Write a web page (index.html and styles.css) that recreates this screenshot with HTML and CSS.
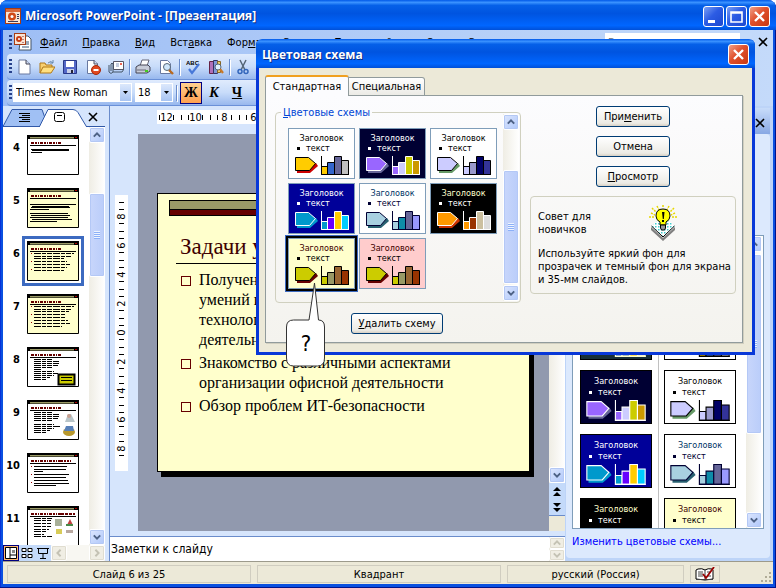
FILE: index.html
```html
<!DOCTYPE html>
<html lang="ru">
<head>
  <meta charset="UTF-8">
  <title>Microsoft PowerPoint - [Презентация]</title>
  <link rel="stylesheet" href="styles.css">
</head>
<body>
  <svg class="defs" aria-hidden="true">
    <symbol id="up" viewBox="0 0 10 8"><path d="M1 6l4-4 4 4" fill="none" stroke="currentColor" stroke-width="2.4"/></symbol>
    <symbol id="down" viewBox="0 0 10 8"><path d="M1 2l4 4 4-4" fill="none" stroke="currentColor" stroke-width="2.4"/></symbol>
    <symbol id="cross" viewBox="0 0 12 12"><path d="M2 2l8 8M10 2l-8 8" fill="none" stroke="currentColor" stroke-width="1.6"/></symbol>
    <symbol id="caret" viewBox="0 0 5 3"><path d="M0 0h5L2.5 3z"/></symbol>
    <symbol id="logo" viewBox="0 0 16 16">
      <rect x=".5" y=".5" width="15" height="15" fill="#f8e4d4" stroke="#a83c14"/>
      <path d="M1 1h14v3H1z" fill="#d8683c"/>
      <circle cx="7" cy="8.500" r="4" fill="#d04818"/><circle cx="7" cy="8.500" r="1.500" fill="#fff"/>
      <path d="M12 6h2v1h-2zM12 8h2v1h-2zM12 10h2v1h-2zM3 13h10v1H3z" fill="#3a3a5a"/>
    </symbol>
    <symbol id="diagram" viewBox="0 0 54 20">
      <path class="a-shadow" d="M2 14v3h13l8-7-2-3z"/>
      <path class="a-face" d="M.5 1.500h13l7 6-6 7H.5z"/>
      <path class="c1" d="M26.500 10.500h6v8h-6z"/>
      <path class="c2" d="M32.500 6.500h7v12h-7z"/>
      <path class="c3" d="M39.500 .5h7v18h-7z"/>
      <path class="c4" d="M46.500 4.500h7v14h-7z"/>
      <path class="axis" d="M26.500 0v18.500H54"/>
    </symbol>
    <symbol id="thumbTop" viewBox="0 0 52 40">
      <path d="M0 0h52v4H0z"/>
      <path d="M3 2h44v1.500H3z" fill="#999966"/>
      <path d="M48 2h2v1h-2z" fill="#a00"/>
      <path d="M4 8h31" stroke="#600" stroke-width="2" stroke-dasharray="3 1 2 1 1 1"/>
      <path d="M3 10.500h46" stroke="#000"/>
      <path d="M.5 .5h51v39H.5z" fill="none" stroke="#000"/>
    </symbol>
  </svg>

  <div class="window">
    <header class="titlebar">
      <svg class="icon"><use href="#logo"/></svg>
      <h1>Microsoft PowerPoint - [Презентация]</h1>
      <button class="caption" aria-label="Свернуть"><svg viewBox="0 0 19 19"><path d="M4 13h7v3H4z" fill="#fff"/></svg></button>
      <button class="caption" aria-label="Развернуть"><svg viewBox="0 0 19 19"><path d="M4 5h11v10H4zM4 6h11" fill="none" stroke="#fff" stroke-width="1.600"/></svg></button>
      <button class="caption red" aria-label="Закрыть"><svg viewBox="0 0 19 19"><path d="M5 5l9 9M14 5l-9 9" stroke="#fff" stroke-width="2.400"/></svg></button>
    </header>

    <div class="bars">
      <nav class="menubar">
        <span class="grip"></span>
        <svg class="doc" viewBox="0 0 18 18"><path d="M7 3h7l3 3v11H5z" fill="#fff" stroke="#456"/><path d="M12 9h3M12 11h3M8 14h7" stroke="#357"/><rect x=".5" y=".5" width="11" height="11" fill="#f8e4d4" stroke="#a83c14"/><circle cx="5" cy="6" r="3" fill="#c83c14"/><circle cx="5" cy="6" r="1" fill="#fff"/><path d="M9 3v1M9 6v1M9 9v1" stroke="#822"/></svg>
        <a href="#"><u>Ф</u>айл</a>
        <a href="#"><u>П</u>равка</a>
        <a href="#"><u>В</u>ид</a>
        <a href="#">Вст<u>а</u>вка</a>
        <a href="#">Фор<u>м</u>ат</a>
        <a href="#">С<u>е</u>рвис</a>
        <a href="#">Показ слайдов</a>
        <a href="#">Окно</a>
        <a href="#">Справка</a>
        <input class="ask" aria-label="Вопрос" placeholder="Введите вопрос">
        <button class="x" aria-label="Закрыть документ"><svg><use href="#cross"/></svg></button>
      </nav>

      <div class="toolbar">
        <span class="grip"></span>
        <button aria-label="Создать"><svg viewBox="0 0 16 16"><path d="M3 1h7l4 4v10H3z" fill="#fff" stroke="#6878a0"/><path d="M10 1v4h4" fill="#cdd8ee" stroke="#445"/></svg></button>
        <button aria-label="Открыть"><svg viewBox="0 0 16 16"><path d="M1 14V4h5l1 2h6v3" fill="#f8d070" stroke="#b07818"/><path d="M1 14l3-6h12l-4 6z" fill="#ffe080" stroke="#b07818"/><path d="M9 4q3-3 5 0m0-3v3h-3" fill="none" stroke="#68a"/></svg></button>
        <button aria-label="Сохранить"><svg viewBox="0 0 16 16"><path d="M1.500 1.500h13v13h-13z" fill="#5468c8" stroke="#283888"/><path d="M4 2h8v6H4z" fill="#fff"/><path d="M5 10h7v4H5z" fill="#c8d0e8"/><path d="M9 11h2v3H9z" fill="#223"/></svg></button>
        <button aria-label="Разрешения"><svg viewBox="0 0 16 16"><path d="M2.500 1.500h7l3 3v10h-10z" fill="#fff" stroke="#6878a0"/><path d="M9 1v4h4" fill="#cdd8ee" stroke="#556"/><circle cx="11" cy="11" r="4.500" fill="#e04820" stroke="#a82808"/><path d="M8.500 11h5" stroke="#fff" stroke-width="2"/></svg></button>
        <button aria-label="Сообщение"><svg viewBox="0 0 16 16"><path d="M5.500 2.500h10v8h-10z" fill="#fff" stroke="#556"/><path d="M8 5h3M8 7h3" stroke="#89b"/><path d="M12 4h2v2h-2z" fill="#e65"/><path d="M1 6v7q2 3 4 0V5Q4 3 3 5v7M5 13h9l2-3" fill="none" stroke="#456"/></svg></button>
        <span class="sep"></span>
        <button aria-label="Печать"><svg viewBox="0 0 16 16"><path d="M5 7l2-6h7l-2 6" fill="#fff" stroke="#667"/><path d="M1 8l3-2h9l2 2v4l-3 2H1z" fill="#c8ccd8" stroke="#445"/><path d="M2 11h9" stroke="#667"/><path d="M10 11h3v2h-3z" fill="#4c2"/></svg></button>
        <button aria-label="Просмотр"><svg viewBox="0 0 16 16"><path d="M2.500 1.500h7l3 3v10h-10z" fill="#fff" stroke="#6878a0"/><circle cx="9" cy="8" r="3.500" fill="#cfe6fa" stroke="#567"/><path d="M11 11l4 4" stroke="#b86a20" stroke-width="2.400"/></svg></button>
        <span class="sep"></span>
        <button aria-label="Орфография"><svg viewBox="0 0 16 16"><text x="1" y="6" class="abc">ABC</text><path d="M4 10l3 4 7-9" fill="none" stroke="#4878d8" stroke-width="2.200"/></svg></button>
        <button aria-label="Справочные материалы"><svg viewBox="0 0 16 16"><path d="M1.500 2.500h4v12h-4z" fill="#b070b8" stroke="#624"/><path d="M5.500 1.500h4v13h-4z" fill="#8098d8" stroke="#336"/><path d="M9.500 2.500h3v11h-3z" fill="#f0d068" stroke="#862"/><circle cx="10" cy="8" r="3" fill="#dff0ff" stroke="#567"/><path d="M12 10l3 4" stroke="#c87828" stroke-width="2.200"/></svg></button>
        <span class="sep"></span>
        <button aria-label="Вырезать"><svg viewBox="0 0 16 16"><path d="M5 1l5 10M11 1L6 11" stroke="#567" stroke-width="1.500"/><circle cx="5" cy="12.500" r="2" fill="none" stroke="#36b" stroke-width="1.500"/><circle cx="11" cy="12.500" r="2" fill="none" stroke="#36b" stroke-width="1.500"/></svg></button>
      </div>

      <div class="toolbar format">
        <span class="grip"></span>
        <span class="combo font"><select aria-label="Шрифт"><option>Times New Roman</option></select><svg><use href="#caret"/></svg></span>
        <span class="combo size"><select aria-label="Размер"><option>18</option></select><svg><use href="#caret"/></svg></span>
        <span class="sep"></span>
        <button class="letter on"><b>Ж</b></button>
        <button class="letter"><i>К</i></button>
        <button class="letter"><u>Ч</u></button>
      </div>
    </div>

    <main class="workspace">
      <aside class="outline">
        <div class="outline-tabs">
          <svg viewBox="0 0 104 21" preserveAspectRatio="xMinYMid slice">
            <path d="M0 20.500L9 3.500h30l6 17z" fill="#a0c0f4" stroke="#3058a8"/>
            <path d="M36 21.500L45 3.500h25q3 0 5 3l9 15z" fill="#fff" stroke="#3058a8"/>
            <path d="M0 20.500h37M83 20.500h21" stroke="#3058a8"/>
            <path d="M16 7.500h11M19 9.500h8M16 11.500h11M19 13.500h8M16 15.500h11" stroke="#000"/>
            <rect x="51.500" y="6.500" width="10" height="9" rx="2" fill="#fff" stroke="#000"/><path d="M54 9.500h5" stroke="#000"/>
          </svg>
          <button class="x" aria-label="Закрыть область"><svg><use href="#cross"/></svg></button>
        </div>
        <div class="outline-body">
          <ol class="thumbs">
            <li><span>4</span><svg viewBox="0 0 52 40"><rect width="52" height="40" fill="#fff"/><path class="ln" d="M4 14.500h38" /><path class="ln" d="M5 15.500h37M4 17.500h11"/><use href="#thumbTop"/></svg></li>
            <li><span>5</span><svg viewBox="0 0 52 40"><rect width="52" height="40" fill="#ffffcc"/><path class="ln" d="M3 16.500h46M5 18.500h37M4 19.500h39M3 21.500h19M3 25.500h38M4 27.500h39M3 29.500h38M5 31.500h40M3 33.500h27"/><use href="#thumbTop"/></svg></li>
            <li class="current"><span>6</span><svg viewBox="0 0 52 40"><rect width="52" height="40" fill="#ffffcc"/><path class="ln dash" d="M7 12.500h40M7 15.500h38M7 17.500h30M7 20.500h33M7 23.500h36M7 26.500h33M7 29.500h30"/><path class="dots" d="M4.500 12v18"/><use href="#thumbTop"/></svg></li>
            <li><span>7</span><svg viewBox="0 0 52 40"><rect width="52" height="40" fill="#ffffcc"/><path class="ln dash" d="M7 12.500h40M7 15.500h38M7 17.500h35M7 20.500h32M7 23.500h32M7 26.500h34M7 29.500h36M7 32.500h28"/><path class="dots" d="M4.500 12v22"/><use href="#thumbTop"/></svg></li>
            <li><span>8</span><svg viewBox="0 0 52 40"><rect width="52" height="40" fill="#fff"/><path class="ln dash" d="M7 12.500h18M7 14.500h25M7 16.500h25M7 18.500h24M7 20.500h19M7 22.500h8M7 24.500h20M7 26.500h24M7 28.500h20M7 30.500h16M7 32.500h12"/><path d="M31.500 27.500h16v10h-16z" fill="#cc0" stroke="#000" stroke-width="2"/><path class="ln" d="M34 30.500h11M34 33.500h11"/><use href="#thumbTop"/></svg></li>
            <li><span>9</span><svg viewBox="0 0 52 40"><rect width="52" height="40" fill="#fff"/><path class="ln dash" d="M7 12.500h18M7 14.500h25M7 16.500h25M7 18.500h24M7 20.500h19M7 24.500h20M7 26.500h26M7 28.500h20M7 30.500h16M7 32.500h12"/><path d="M38 22l3-8h3l4 8z" fill="#b8c4c8"/><circle cx="42" cy="16" r="2" fill="#c8a090"/><ellipse cx="42" cy="32" rx="6" ry="4" fill="#b8982c"/><path d="M37 31l2-5h7l1 5z" fill="#5880b8"/><use href="#thumbTop"/></svg></li>
            <li><span>10</span><svg viewBox="0 0 52 40"><rect width="52" height="40" fill="#fff"/><path class="ln" d="M7 13.500h33M7 16.500h32M7 18.500h9M7 21.500h35M7 24.500h32M7 27.500h34M7 30.500h35M7 32.500h22"/><path class="dots" d="M4.500 13v18"/><use href="#thumbTop"/><path d="M34 8h10" stroke="#600" stroke-width="2" stroke-dasharray="2 1"/></svg></li>
            <li><span>11</span><svg viewBox="0 0 52 40"><rect width="52" height="40" fill="#fff"/><path class="ln dash" d="M7 12.500h18M7 14.500h17M7 17.500h17M7 20.500h17M7 23.500h15M7 25.500h12M7 28.500h10M7 30.500h18"/><path d="M28 13h7v7h-7z" fill="#a8b098"/><path d="M40 19l3-6 3 6z" fill="#c04040"/><path d="M39 18h7v2h-7z" fill="#488848"/><path d="M29 23h6v5h-6z" fill="#d8cc58"/><path d="M39 24h7v3h-7z" fill="#b8a8a0"/><use href="#thumbTop"/><path d="M34 8h14" stroke="#600" stroke-width="2" stroke-dasharray="3 1"/></svg></li>
          </ol>
          <div class="scroll">
            <button aria-label="Вверх"><svg><use href="#up"/></svg></button>
            <span class="track"><span class="thumb slides-thumb"></span></span>
            <button aria-label="Вниз"><svg><use href="#down"/></svg></button>
          </div>
        </div>
        <div class="views">
          <button class="on" aria-label="Обычный"><svg viewBox="0 0 12 12"><path d="M.5 .5h11v11H.5zM5 1v10M5 8h6" fill="#fff" stroke="#000"/><path d="M7 3h3v3H7z" fill="#888"/></svg></button>
          <button aria-label="Сортировщик"><svg viewBox="0 0 12 12"><path d="M1 1.500h4v3H1zM7 1.500h4v3H7zM1 7.500h4v3H1zM7 7.500h4v3H7z" fill="#fff" stroke="#000"/></svg></button>
          <button aria-label="Показ слайдов"><svg viewBox="0 0 12 12"><path d="M0 1.500h12M1.500 2v4.500h9V2M6 7v4M3 11.500h6" fill="none" stroke="#000"/></svg></button>
          <div class="hscroll">
            <button disabled aria-label="Влево"><svg><use href="#up"/></svg></button>
            <button disabled aria-label="Вправо"><svg><use href="#down"/></svg></button>
          </div>
        </div>
      </aside>

      <section class="editor">
        <div class="hruler" id="hruler"></div>
        <div class="vruler" id="vruler"></div>
        <div class="canvas">
          <article class="slide">
            <div class="band"></div>
            <h2>Задачи урока</h2>
            <ul>
              <li>Получение<br>умений и<br>технологий<br>деятельности</li>
              <li>Знакомство с различными аспектами<br>организации офисной деятельности</li>
              <li>Обзор проблем ИТ-безопасности</li>
            </ul>
          </article>
        </div>
        <div class="side">
          <div class="scroll">
            <button aria-label="Вверх"><svg><use href="#up"/></svg></button>
            <span class="track"></span>
            <button aria-label="Вниз"><svg><use href="#down"/></svg></button>
          </div>
          <button class="jump" aria-label="Предыдущий слайд"><svg viewBox="0 0 8 9"><path d="M4 0l4 4H0zM4 5l4 4H0z"/></svg></button>
          <button class="jump" aria-label="Следующий слайд"><svg viewBox="0 0 8 9"><path d="M0 0h8L4 4zM0 5h8L4 9z"/></svg></button>
          <span class="corner"></span>
        </div>
        <div class="notes">
          <p>Заметки к слайду</p>
          <div class="scroll">
            <button disabled aria-label="Вверх"><svg><use href="#up"/></svg></button>
            <button disabled aria-label="Вниз"><svg><use href="#down"/></svg></button>
          </div>
        </div>
      </section>

      <aside class="pane">
        <div class="pane-head"><button class="x" aria-label="Закрыть панель"><svg><use href="#cross"/></svg></button></div>
        <div class="pane-body">
          <div class="pane-list">
            <div class="pane-schemes" id="paneSchemes"></div>
            <div class="scroll">
              <button aria-label="Вверх"><svg><use href="#up"/></svg></button>
              <span class="track"><span class="thumb pane-thumb"></span></span>
              <button aria-label="Вниз"><svg><use href="#down"/></svg></button>
            </div>
          </div>
          <a class="edit" href="#">Изменить цветовые схемы...</a>
        </div>
      </aside>
    </main>

    <footer class="status">
      <span class="wide">Слайд 6 из 25</span>
      <span class="wide">Квадрант</span>
      <span class="lang">русский (Россия)</span>
      <span class="spell"><svg viewBox="0 0 20 15"><path d="M1 3l2-1q4-1 7 1 3-2 7-1l1 1v9l-8 1-9-1z" fill="#fff" stroke="#000"/><path d="M10 3v10M3 5h5M3 7h5M3 9h5M12 5h4M12 9h4M1 12.500h17" stroke="#444"/><path d="M8 7l3 4 8-11" fill="none" stroke="#900" stroke-width="1.800"/></svg></span>
      <svg class="resize" viewBox="0 0 12 12"><path d="M9 1h2v2H9zM5 5h2v2H5zM9 5h2v2H9zM1 9h2v2H1zM5 9h2v2H5zM9 9h2v2H9z" fill="#b0ac98"/></svg>
    </footer>

    <div class="dialog" role="dialog" aria-label="Цветовая схема">
      <header class="titlebar">
        <h1>Цветовая схема</h1>
        <button class="caption red" aria-label="Закрыть"><svg viewBox="0 0 19 19"><path d="M5 5l9 9M14 5l-9 9" stroke="#fff" stroke-width="2.400"/></svg></button>
      </header>
      <div class="tabs">
        <button class="tab active">Стандартная</button>
        <button class="tab">Специальная</button>
      </div>
      <div class="page">
        <div class="left">
          <fieldset>
            <legend><u>Ц</u>ветовые схемы</legend>
            <div class="schemes" id="dialogSchemes"></div>
            <div class="scroll">
              <button aria-label="Вверх"><svg><use href="#up"/></svg></button>
              <span class="track"><span class="thumb dialog-thumb"></span></span>
              <button aria-label="Вниз"><svg><use href="#down"/></svg></button>
            </div>
          </fieldset>
          <button class="btn delete"><u>У</u>далить схему</button>
        </div>
        <div class="right">
          <button class="btn">При<u>м</u>енить</button>
          <button class="btn">Отмена</button>
          <button class="btn"><u>П</u>росмотр</button>
          <div class="tip">
            <div class="tip-head">
              <p>Совет для новичков</p>
              <svg viewBox="0 0 28 36">
                <defs><pattern id="dots" width="3" height="3" patternUnits="userSpaceOnUse"><rect width="3" height="3" fill="#fff"/><rect width="1.500" height="1.500" fill="#4cc"/></pattern></defs>
                <path d="M2 22l12 11 12-11v3L14 36 2 25z" fill="#808080"/>
                <path d="M2.500 21L14 10l11.500 11L14 32z" fill="url(#dots)"/>
                <path d="M2.500 21L14 32l11.500-11" fill="none" stroke="#000"/>
                <path d="M14 0v3M3 3l4 4M25 3l-4 4M0 12h5M28 12h-5M8 1l2 4M20 1l-2 4M2 8l4 2M26 8l-4 2" stroke="#e8d800" stroke-width="1.500" stroke-dasharray="2 1"/>
                <path d="M11 20v-3q-4-2-4-6 0-7 7-7t7 7q0 4-4 6v3z" fill="#ff0" stroke="#000"/>
                <path d="M11.500 20h5v3l-1 2h-3l-1-2z" fill="#999" stroke="#000"/>
                <path d="M13 7h2.500l-.7 7h-1zM13 15h2v2h-2z"/>
              </svg>
            </div>
            <p>Используйте яркий фон для прозрачек и темный фон для экрана и 35-мм слайдов.</p>
          </div>
        </div>
      </div>
      <div class="callout">
        <svg viewBox="0 0 40 85"><path d="M23 38L28.500 1l4 37q6 0 6 7v31q0 8-7 8h-24q-7 0-7-8V45q0-7 7-7z" fill="#fff" stroke="#333"/></svg>
        <span>?</span>
      </div>
    </div>
  </div>

  <script>
    const dialogSchemes = ["white", "night", "lilac", "royal", "teal", "black", "cream", "pink"];
    const paneSchemes = ["forest", "white", "night", "lilac", "royal", "teal", "black", "cream"];

    function card(name) {
      const picked = name === "cream" ? " picked" : "";
      return `<button class="scheme ${name}${picked}">
        <span class="s-title">Заголовок</span>
        <span class="s-text">текст</span>
        <svg><use href="#diagram"/></svg>
      </button>`;
    }

    function fill(id, list, make) {
      document.getElementById(id).innerHTML = list.map(make).join("");
    }

    fill("dialogSchemes", dialogSchemes, card);
    fill("paneSchemes", paneSchemes, card);
    fill("hruler", [12, 10, 8, 6, "", "", "", "", "", "", "", "", ""], n => `<span><b>${n}</b></span>`);
    fill("vruler", [8, 6, 4, 2, 0, 2, 4, 6, 8], n => `<span><b>${n}</b></span>`);
  </script>
</body>
</html>
```
FILE: styles.css
```css
* {
  box-sizing: border-box;
}
body {
  margin: 0;
  background: #fff;
  color: #000;
  font: 11px/13px "DejaVu Sans Condensed", "Liberation Sans", sans-serif;
}
h1, h2, p, ul, ol {
  margin: 0;
  padding: 0;
}
button {
  padding: 0;
  border: 0;
  background: none;
  color: inherit;
  font: inherit;
}
svg {
  display: block;
}
.defs {
  position: absolute;
  width: 0;
  height: 0;
}

/* main window */
.window {
  position: relative;
  display: flex;
  flex-direction: column;
  height: 100vh;
  min-height: 500px;
  padding: 0 3px 4px;
  background: #0a50e0;
  border-radius: 8px 8px 0 0;
  box-shadow: inset -1px -1px 0 #00138c, inset 1px 0 0 #0831d9;
  overflow: hidden;
}
.titlebar {
  display: flex;
  flex: none;
  align-items: center;
  gap: 2px;
  height: 30px;
  margin: 0 -3px;
  padding: 2px 6px 0 5px;
  background: linear-gradient(#0058e8, #3a92ff 8%, #0560e8 18%, #0054e0 45%, #0066ff 85%, #0050d8);
  color: #fff;
}
.titlebar h1 {
  flex: 1;
  padding-left: 2px;
  font: bold 12px/16px "Open Sans", "Noto Sans", sans-serif;
  text-shadow: 1px 1px 0 #0a2a80;
}
.icon {
  width: 16px;
  height: 16px;
}
.caption {
  width: 21px;
  height: 21px;
  border: 1px solid #fff;
  border-radius: 3px;
  background: linear-gradient(135deg, #7ba0f4, #2c5ce4 45%, #1c48d0);
}
.caption.red {
  background: linear-gradient(135deg, #f0a088, #e0502c 45%, #c83810);
}

.bars {
  flex: none;
  background: linear-gradient(90deg, #9ebef5, #c4dafa);
}
.menubar {
  display: flex;
  align-items: center;
  gap: 15px;
  height: 24px;
  padding: 0 4px 0 6px;
  white-space: nowrap;
}
.menubar a {
  color: #000;
  text-decoration: none;
}
.menubar .grip {
  margin-right: -13px;
}
.doc {
  flex: none;
  width: 18px;
  height: 18px;
  margin-right: -7px;
}
.ask {
  width: 147px;
  height: 18px;
  margin-left: auto;
  padding: 0 3px;
  border: 0;
  border-right: 12px solid #c4dafa;
  font: inherit;
}
.x {
  width: 12px;
  height: 12px;
}
.x svg {
  width: 12px;
  height: 12px;
}
.menubar .x {
  margin-left: -10px;
}
.grip {
  flex: none;
  width: 3px;
  height: 15px;
  background: repeating-linear-gradient(#27418c 0 2px, transparent 2px 4px);
}

.toolbar {
  display: flex;
  align-items: center;
  gap: 7px;
  width: 80%;
  height: 26px;
  margin-left: 4px;
  padding-left: 2px;
  border-bottom: 1px solid #6a90d8;
  border-radius: 4px;
  background: linear-gradient(#e0ebfd, #c8dcfa 50%, #98b8ee);
}
.toolbar .grip {
  margin-right: -3px;
}
.toolbar button {
  flex: none;
  width: 16px;
}
.toolbar button svg {
  width: 16px;
  height: 16px;
}
.toolbar .sep {
  width: 1px;
  height: 16px;
  margin: 0 -2px;
  background: #6a8ccb;
  box-shadow: 1px 1px 0 #fff;
}
.abc {
  font: bold 6px "Liberation Sans", sans-serif;
}
.format {
  gap: 3px;
}
.toolbar.format .grip {
  margin-right: -2px;
}
.toolbar.format .sep {
  margin: 0;
}
.combo {
  position: relative;
  height: 19px;
  background: #fff;
}
.combo select {
  width: 100%;
  height: 19px;
  padding: 0 3px;
  border: 0;
  background: none;
  color: #000;
  font: inherit;
  appearance: none;
}
.combo svg {
  position: absolute;
  top: 1px;
  right: 1px;
  width: 11px;
  height: 17px;
  padding: 7px 3px;
  background: linear-gradient(#dce8fc, #a8c4f2);
  pointer-events: none;
}
.font {
  width: 119px;
}
.size {
  width: 38px;
}
.toolbar .letter {
  width: 22px;
  height: 22px;
  border: 1px solid transparent;
  font: bold 14px/18px "Liberation Serif", serif;
}
.toolbar .letter + .letter {
  margin-left: -2px;
}
.toolbar .letter.on {
  border-color: #000080;
  background: linear-gradient(#ffd090, #ffa050);
}

.workspace {
  display: flex;
  flex: 1;
  min-height: 0;
  background: #d6e5fc;
}

/* slide list */
.outline {
  display: flex;
  flex-direction: column;
  flex: none;
  width: 102px;
}
.outline-tabs {
  display: flex;
  flex: none;
  align-items: center;
  height: 21px;
  background: #d6e5fc;
}
.outline-tabs > svg {
  flex: none;
  width: 102px;
  height: 21px;
  margin-right: -18px;
}
.outline-tabs .x {
  z-index: 1;
}
.outline-body {
  display: flex;
  flex: 1;
  min-height: 0;
}
.thumbs {
  display: flex;
  flex-direction: column;
  flex: 1;
  gap: 13px;
  padding-top: 8px;
  background: #fff;
  list-style: none;
  overflow: hidden;
}
.thumbs li {
  display: flex;
  gap: 7px;
}
.thumbs span {
  width: 17px;
  margin-top: 6px;
  font-weight: bold;
  text-align: right;
}
.thumbs svg {
  flex: none;
  width: 52px;
  height: 40px;
}
.current svg {
  outline: 3px solid #3c6ac0;
  outline-offset: 2px;
}
.ln {
  stroke: #000;
}
.dash {
  stroke-dasharray: 7 1 4 1 5 1;
}
.dots {
  stroke: #900;
  stroke-dasharray: 1 7;
}

/* scroll bars */
.scroll {
  display: flex;
  flex: none;
  flex-direction: column;
  width: 16px;
  background: linear-gradient(90deg, #efede4, #fff);
}
.scroll button, .hscroll button {
  flex: none;
  width: 16px;
  height: 16px;
  padding: 3px;
  border: 1px solid #fff;
  border-radius: 2px;
  background: linear-gradient(135deg, #dce6fe, #b0c8fa);
  box-shadow: inset 0 0 0 1px #b4c8f4;
  color: #4d6185;
}
.scroll svg, .hscroll svg {
  width: 8px;
  height: 8px;
}
.scroll button:disabled, .hscroll button:disabled {
  background: #f0eee4;
  box-shadow: inset 0 0 0 1px #e0ddd0;
  color: #c4c2b4;
}
.track {
  display: flex;
  flex: 1;
  flex-direction: column;
}
.thumb {
  width: 16px;
  border: 1px solid #fff;
  border-radius: 2px;
  background: repeating-linear-gradient(#eef4fe 0 1px, #8cb0f8 1px 2px) center / 6px 8px no-repeat, linear-gradient(90deg, #c8d6fb, #bacdfa);
  box-shadow: inset 0 0 0 1px #b4c8f6;
}
.slides-thumb {
  height: 84px;
  margin-top: 50px;
}

.views {
  display: flex;
  flex: none;
  height: 16px;
  background: #c4dafa;
}
.views > button {
  width: 16px;
  padding: 2px;
}
.views > button.on {
  border: 1px solid #000080;
  padding: 1px;
  background: #ffb870;
}
.views > button svg {
  width: 12px;
  height: 12px;
}
.hscroll {
  display: flex;
  flex: 1;
  justify-content: space-between;
  background: #f8f7f2;
}
.hscroll svg {
  transform: rotate(-90deg);
}

/* slide editor */
.editor {
  display: grid;
  flex: 1;
  grid-template-columns: 28px 1fr 16px;
  grid-template-rows: 28px 1fr 30px;
  min-width: 0;
  margin-left: 4px;
  border-left: 1px solid #6a8ccb;
}
.hruler {
  display: flex;
  grid-column: 2;
  align-self: start;
  height: 14px;
  margin: 4px 19px 0;
  background: #fff;
  overflow: hidden;
}
.hruler span:first-child {
  margin-left: -5px;
}
.vruler {
  display: flex;
  flex-direction: column;
  grid-row: 2;
  justify-content: center;
  justify-self: center;
  align-self: center;
  width: 13px;
  height: 276px;
  margin-right: 5px;
  background: #fff;
  overflow: hidden;
}
.hruler span, .vruler span {
  display: flex;
  flex: none;
  align-items: center;
  justify-content: center;
}
.hruler span {
  width: 29px;
  height: 14px;
  background:
    linear-gradient(#000, #000) 0 center / 1px 5px no-repeat,
    linear-gradient(#000, #000) 7px center / 1px 5px no-repeat,
    linear-gradient(#000, #000) 21px center / 1px 5px no-repeat;
}
.vruler span {
  width: 13px;
  height: 29px;
  background:
    linear-gradient(#000, #000) center 0 / 5px 1px no-repeat,
    linear-gradient(#000, #000) center 7px / 5px 1px no-repeat,
    linear-gradient(#000, #000) center 21px / 5px 1px no-repeat;
}
.hruler b, .vruler b {
  background: #fff;
  font-weight: normal;
}
.vruler b {
  transform: rotate(-90deg);
}
.canvas {
  display: flex;
  grid-row: 2;
  grid-column: 2;
  align-items: center;
  padding: 0 19px;
  background: #9199ae;
  overflow: hidden;
}
.slide {
  flex: 1;
  aspect-ratio: 4 / 3;
  padding: 6px 11px;
  border: 1px solid #000;
  background: #ffffcc;
  box-shadow: 4px 5px 0 #000;
  font: 16px/20px "Liberation Serif", serif;
  white-space: nowrap;
}
.band {
  height: 16px;
  border: 1px solid #000;
  background: linear-gradient(#999966 0 8px, #000 8px 9px, #660000 9px);
}
.slide h2 {
  margin: 16px 0 6px 7px;
  padding: 0 0 2px 4px;
  border-bottom: 1px solid #000;
  color: #400000;
  font: 23px/29px "Liberation Serif", serif;
}
.slide ul {
  display: flex;
  flex-direction: column;
  gap: 3px;
  list-style: none;
}
.slide li {
  position: relative;
  padding-left: 30px;
}
.slide li::before {
  content: "";
  position: absolute;
  top: 6px;
  left: 12px;
  width: 8px;
  height: 8px;
  border: 1px solid #660000;
}
.side {
  display: flex;
  flex-direction: column;
  grid-row: 1 / 3;
  grid-column: 3;
}
.side .scroll {
  flex: 1;
}
.jump {
  flex: none;
  height: 16px;
  padding: 4px;
  background: #c4dafa;
}
.jump svg {
  width: 8px;
  height: 9px;
}
.corner {
  flex: none;
  height: 16px;
  border-top: 1px solid #6a8ccb;
  background: #ece9d8;
}
.notes {
  display: flex;
  grid-row: 3;
  grid-column: 1 / 4;
  justify-content: space-between;
  margin-top: 5px;
  border-top: 1px solid #6a8ccb;
  background: #fff;
}
.notes p {
  padding: 4px 1px;
  font-size: 12px;
  line-height: 16px;
}
.notes .scroll button {
  height: 12px;
  padding: 1px 3px;
}

/* task pane */
.pane {
  display: flex;
  flex: none;
  flex-direction: column;
  width: 208px;
  padding: 2px 3px 3px 1px;
  background: #bdd4f8;
}
.pane-head {
  display: flex;
  flex: none;
  align-items: center;
  justify-content: flex-end;
  height: 26px;
  padding: 3px 4px 0 0;
  background: linear-gradient(#c8dcfa, #88a8e4);
}
.pane-body {
  display: flex;
  flex: 1;
  flex-direction: column;
  min-height: 0;
  padding: 101px 6px 8px;
  border-radius: 4px;
  background: #dce9fd;
}
.pane-list {
  display: flex;
  flex: 1;
  justify-content: space-between;
  min-height: 0;
  padding-right: 1px;
  border: 1px solid #7f9db9;
  background: #fff;
}
/* scrolled by one row, the first visible row is cut by the dialog */
.pane-schemes {
  display: grid;
  grid-template-columns: 72px 72px;
  grid-auto-rows: 54px;
  gap: 10px 12px;
  padding: 70px 6px 0 7px;
  background: linear-gradient(#c0c0c0, #c0c0c0) 85px 0 / 1px 100% no-repeat;
  overflow: hidden;
}
.pane-thumb {
  flex: none;
  height: 180px;
  margin-top: 2px;
}
.edit {
  margin-top: 5px;
  color: #0000ff;
  line-height: 16px;
  text-decoration: none;
}

/* colour scheme samples */
.scheme {
  --line: #000;
  display: flex;
  flex-direction: column;
  align-items: center;
  padding-top: 4px;
  border: 1px solid #7f9db9;
  background: var(--bg);
  color: var(--fg);
  font-size: 9px;
  line-height: 10px;
}
.s-title {
  color: var(--title, var(--fg));
}
.s-text {
  display: flex;
  align-items: center;
  align-self: flex-start;
  gap: 6px;
  padding-left: 8px;
}
.s-text::before {
  content: "";
  width: 3px;
  height: 3px;
  background: var(--fg);
}
.scheme svg {
  width: 54px;
  height: 20px;
  margin-top: 3px;
}
.pane .scheme {
  border-color: #000;
  padding-top: 5px;
  line-height: 11px;
}
.pane .scheme svg {
  width: 60px;
  height: 22px;
  margin-top: 2px;
}
.a-shadow { fill: var(--shadow); }
.a-face { fill: var(--c1); stroke: var(--line); }
.c1 { fill: var(--c1); stroke: var(--line); }
.c2 { fill: var(--c2); stroke: var(--line); }
.c3 { fill: var(--c3); stroke: var(--line); }
.c4 { fill: var(--c4); stroke: var(--line); }
.axis { fill: none; stroke: var(--line); }
.white { --bg: #fff; --fg: #000; --c1: #ffcc00; --shadow: #cc0000; --c2: #3366cc; --c3: #666699; --c4: #c0c0c0; }
.night { --bg: #000033; --fg: #fff; --line: #fff; --c1: #9966ff; --shadow: #666699; --c2: #ccccff; --c3: #cccc00; --c4: #cc9900; }
.lilac { --bg: #fff; --fg: #000; --c1: #ccccff; --shadow: #669966; --c2: #9999cc; --c3: #000066; --c4: #333399; }
.royal { --bg: #000099; --fg: #fff; --line: #fff; --c1: #0099cc; --shadow: #0099cc; --c2: #6600ff; --c3: #ffcc00; --c4: #00ccff; }
.teal { --bg: #fff; --fg: #000033; --title: #003366; --line: #000033; --c1: #a8d0e0; --shadow: #286070; --c2: #0e8ca8; --c3: #666699; --c4: #9999ff; }
.black { --bg: #000; --fg: #fff; --title: #ffffcc; --line: #fff; --c1: #ff9900; --shadow: #cc3300; --c2: #993300; --c3: #ccc0a0; --c4: #ddd; }
.cream { --bg: #ffffcc; --fg: #000; --title: #400000; --c1: #cccc00; --shadow: #660000; --c2: #999966; --c3: #996633; --c4: #993300; }
.pink { --bg: #ffcccc; --fg: #000; --title: #400000; --c1: #cccc00; --shadow: #660000; --c2: #999966; --c3: #996633; --c4: #993300; }
.forest { --bg: #172f36; --fg: #fff; --line: #ffffcc; --c1: #3366cc; --shadow: #666; --c2: #6688aa; --c3: #ffcc00; --c4: #eee8d0; }
.scheme.black .a-face, .scheme.night .a-face, .scheme.royal .a-face { stroke: #fff; }

/* status bar */
.status {
  display: flex;
  flex: none;
  align-items: stretch;
  gap: 6px;
  height: 23px;
  padding: 3px 1px 1px 4px;
  border-top: 1px solid #9c9a8c;
  background: #ece9d8;
}
.status span {
  display: flex;
  align-items: center;
  justify-content: center;
  border: 1px solid #d0cdc0;
}
.status .wide {
  flex: 1;
}
.status .lang {
  width: 177px;
}
.status .spell {
  width: 30px;
}
.spell svg {
  width: 20px;
  height: 15px;
}
.resize {
  align-self: flex-end;
  width: 12px;
  height: 12px;
  margin-left: 34px;
}

/* colour scheme dialog */
.dialog {
  position: absolute;
  top: 39px;
  right: 21px;
  width: 499px;
  padding: 0 3px 3px;
  border-radius: 6px 6px 0 0;
  background: linear-gradient(#ece9d8, #ece9d8) 3px 0 / calc(100% - 6px) calc(100% - 3px) no-repeat #0838d8;
}
.dialog .titlebar {
  height: 29px;
  padding-left: 4px;
  border-radius: 6px 6px 0 0;
}
.tabs {
  position: relative;
  display: flex;
  align-items: flex-end;
  height: 28px;
  margin: 0 6px -1px;
}
.tab {
  width: 76px;
  height: 19px;
  border: 1px solid #919b9c;
  border-left: 0;
  border-radius: 0 3px 0 0;
  background: linear-gradient(#fff, #ecebe6);
}
.tab.active {
  width: 84px;
  height: 21px;
  border-top: 2px solid #f0a020;
  border-bottom: 0;
  border-left: 1px solid #919b9c;
  border-radius: 3px 3px 0 0;
  background: #fcfcfe;
}
.page {
  display: flex;
  gap: 9px;
  margin: 0 9px 9px 6px;
  padding: 10px 6px 8px 9px;
  border: 1px solid #919b9c;
  background: linear-gradient(#fcfcfe, #f4f3ee);
  box-shadow: 1px 1px 0 #d0cebf;
}
.left {
  flex: none;
  width: 246px;
}
fieldset {
  display: flex;
  justify-content: space-between;
  height: 197px;
  margin: 0;
  padding: 0 1px 0 9px;
  border: 1px solid #d0d0bf;
  border-radius: 4px;
}
legend {
  margin-left: -4px;
  padding: 0 2px;
  color: #0046d5;
}
.schemes {
  display: grid;
  grid-template-columns: repeat(3, 67px);
  grid-auto-rows: 51px;
  gap: 4px;
  padding: 9px 3px;
}
.schemes .picked {
  outline: 2px solid #000;
  box-shadow: 0 0 0 3px #3c6ac0;
}
.left .scroll {
  height: 187px;
  margin-top: -5px;
}
.dialog-thumb {
  height: 114px;
  margin-top: 40px;
}
.btn {
  width: 74px;
  height: 21px;
  border: 1px solid #003c74;
  border-radius: 3px;
  background: linear-gradient(#fff, #ecebe5 85%, #d8d0c4);
}
.delete {
  display: block;
  width: 92px;
  margin: 10px 0 0 76px;
}
.right {
  display: flex;
  flex: 1;
  flex-direction: column;
  align-items: center;
  gap: 9px;
}
.tip {
  align-self: stretch;
  height: 98px;
  padding: 8px 1px 0 7px;
  border: 1px solid #d0d0bf;
  border-radius: 4px;
}
.tip-head {
  display: flex;
  align-items: center;
  gap: 49px;
  margin-bottom: 6px;
}
.tip-head p {
  width: 62px;
}
.tip-head svg {
  width: 28px;
  height: 36px;
}
.callout {
  position: absolute;
  top: 243px;
  left: 30px;
  width: 40px;
  height: 85px;
}
.callout svg {
  width: 40px;
  height: 85px;
}
.callout span {
  position: absolute;
  top: 50px;
  width: 100%;
  font-size: 22px;
  line-height: 24px;
  text-align: center;
}
```
